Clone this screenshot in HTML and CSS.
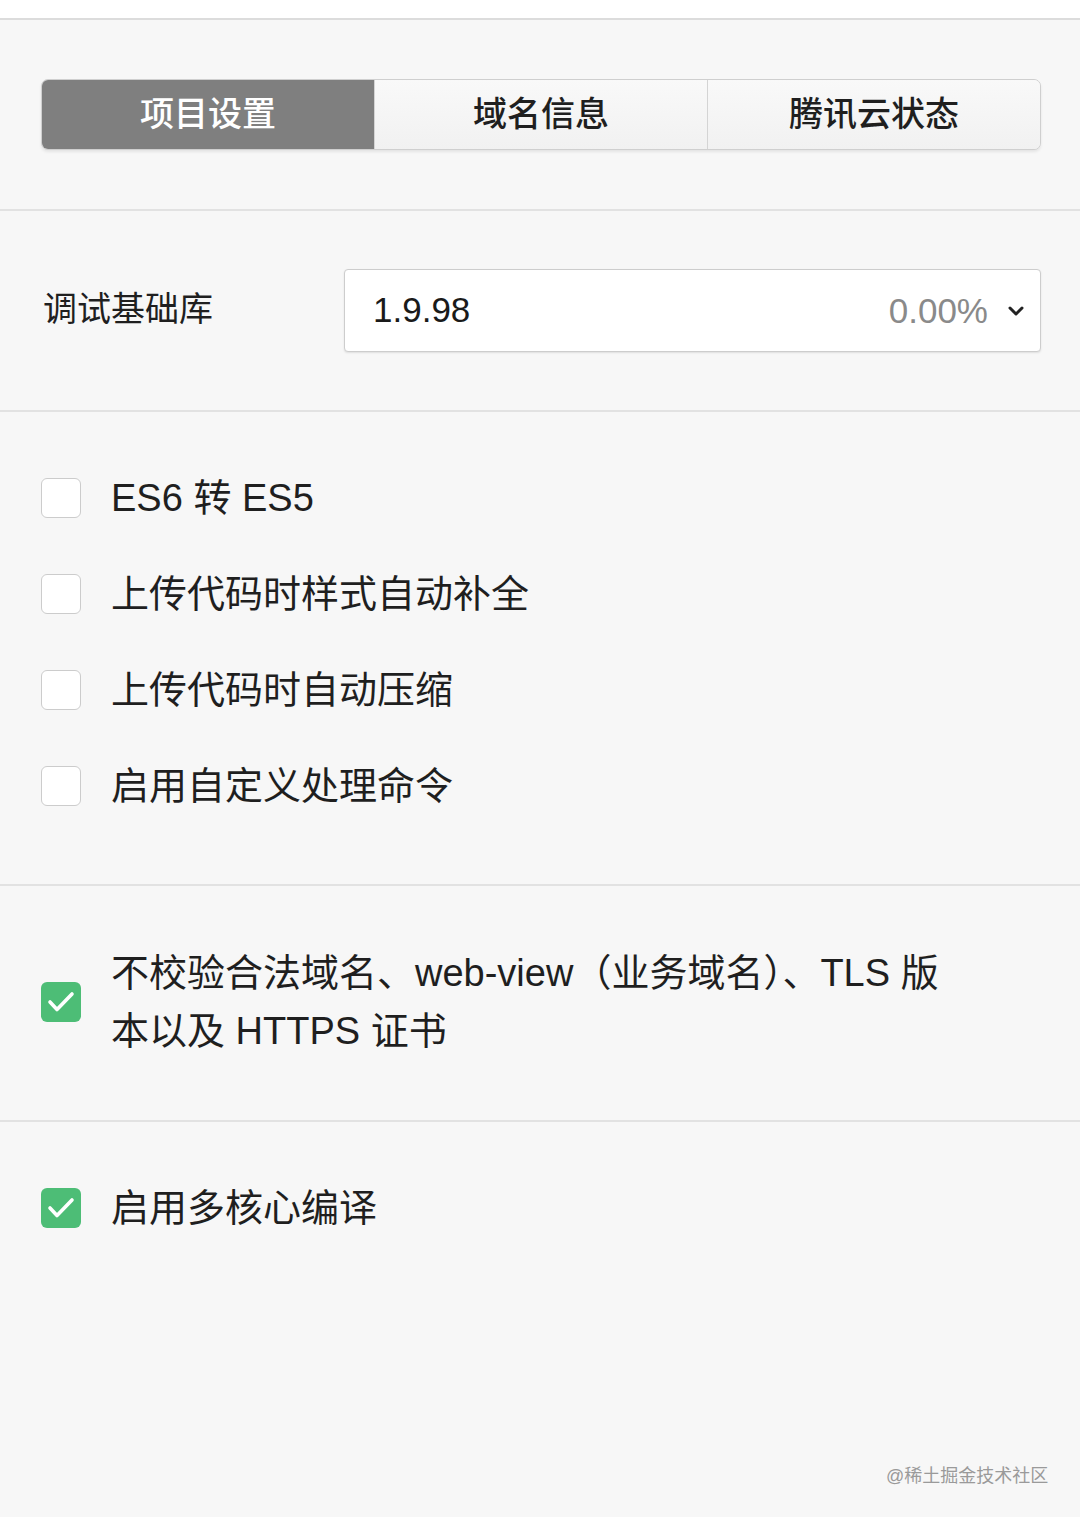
FILE: index.html
```html
<!DOCTYPE html>
<html lang="zh-CN">
<head>
<meta charset="utf-8">
<link rel="stylesheet" href="styles.css">
</head>
<body>
<div class="topbar"></div>
<section class="sec sec-tabs">
  <div class="tabs">
    <div class="tab active">项目设置</div>
    <div class="tab">域名信息</div>
    <div class="tab">腾讯云状态</div>
  </div>
</section>
<section class="sec sec-lib">
  <div class="lib-label">调试基础库</div>
  <div class="select">
    <span class="ver">1.9.98</span>
    <span class="pct">0.00%</span>
    <svg class="chev" width="20" height="14" viewBox="0 0 20 14"><path d="M4 4 L10 10 L16 4" fill="none" stroke="#222" stroke-width="3" stroke-linecap="round" stroke-linejoin="round"/></svg>
  </div>
</section>
<section class="sec sec-checks">
  <div class="row"><span class="cb"></span><span class="txt">ES6 转 ES5</span></div>
  <div class="row"><span class="cb"></span><span class="txt">上传代码时样式自动补全</span></div>
  <div class="row"><span class="cb"></span><span class="txt">上传代码时自动压缩</span></div>
  <div class="row"><span class="cb"></span><span class="txt">启用自定义处理命令</span></div>
</section>
<section class="sec sec-domain">
  <div class="row multi"><span class="cb on"><svg width="40" height="40" viewBox="0 0 40 40"><path d="M9 20 L16 27.5 L31 12" fill="none" stroke="#fff" stroke-width="3.6" stroke-linecap="round" stroke-linejoin="round"/></svg></span><span class="txt wrap">不校验合法域名、web-view（业务域名）、TLS 版本以及 HTTPS 证书</span></div>
</section>
<section class="sec sec-multi">
  <div class="row"><span class="cb on"><svg width="40" height="40" viewBox="0 0 40 40"><path d="M9 20 L16 27.5 L31 12" fill="none" stroke="#fff" stroke-width="3.6" stroke-linecap="round" stroke-linejoin="round"/></svg></span><span class="txt">启用多核心编译</span></div>
  <div class="watermark">@稀土掘金技术社区</div>
</section>
</body>
</html>
```
FILE: styles.css
```css
html, body {
  margin: 0;
  padding: 0;
}
body {
  background: #f7f7f7;
  font-family: "Liberation Sans", "Noto Sans CJK SC", sans-serif;
  color: #1f1f1f;
  width: 1080px;
  height: 1517px;
  overflow: hidden;
}
.topbar {
  height: 18px;
  background: #ffffff;
  border-bottom: 2px solid #dcdcdc;
}
.sec {
  border-bottom: 2px solid #e2e2e2;
}
.sec-tabs {
  padding: 59px 39px 59px 41px;
}
.tabs {
  display: flex;
  height: 69px;
  border: 1px solid #cfcfcf;
  border-radius: 7px;
  overflow: hidden;
  box-shadow: 0 2px 3px rgba(0,0,0,0.08);
  background: #f6f6f6;
}
.tab {
  flex: 1;
  display: flex;
  align-items: center;
  justify-content: center;
  font-size: 34px;
  font-weight: 500;
  color: #1f1f1f;
  padding-bottom: 7px;
  border-left: 1px solid #d4d4d4;
  background: linear-gradient(#f9f9f9, #f1f1f1);
}
.tab:first-child {
  border-left: none;
}
.tab.active {
  background: #7f7f7f;
  color: #ffffff;
}
.sec-lib {
  display: flex;
  align-items: center;
  padding: 58px 39px 58px 43px;
}
.lib-label {
  width: 301px;
  font-size: 34px;
  padding-bottom: 8px;
}
.select {
  flex: 1;
  height: 81px;
  display: flex;
  align-items: center;
  background: #ffffff;
  border: 1px solid #cdcdcd;
  border-radius: 4px;
  box-shadow: 0 1px 2px rgba(0,0,0,0.1);
  padding: 0 14px 0 28px;
}
.ver {
  flex: 1;
  font-size: 35px;
  color: #1a1a1a;
  padding-bottom: 1px;
}
.pct {
  font-size: 35px;
  color: #8a8a8a;
  margin-right: 18px;
}
.chev {
  display: block;
}
.sec-checks {
  padding: 38px 0 50px 41px;
}
.row {
  display: flex;
  align-items: center;
  height: 96px;
}
.cb {
  flex: none;
  width: 38px;
  height: 38px;
  border: 1.5px solid #cccccc;
  border-radius: 6px;
  background: #ffffff;
  margin-right: 30px;
  box-sizing: content-box;
}
.cb.on {
  width: 40px;
  height: 40px;
  border: none;
  background: #4dbd76;
  display: flex;
}
.txt {
  font-size: 38px;
  line-height: 58px;
}
.sec-domain {
  padding: 58px 0 60px 41px;
}
.row.multi {
  height: auto;
}
.wrap {
  max-width: 848px;
}
.sec-multi {
  border-bottom: none;
  padding: 57px 0 0 41px;
  height: 338px;
  position: relative;
}
.sec-multi .row {
  height: 58px;
}
.watermark {
  position: absolute;
  left: 886px;
  top: 339px;
  font-size: 18px;
  color: #9a9a9a;
  white-space: nowrap;
}
```
